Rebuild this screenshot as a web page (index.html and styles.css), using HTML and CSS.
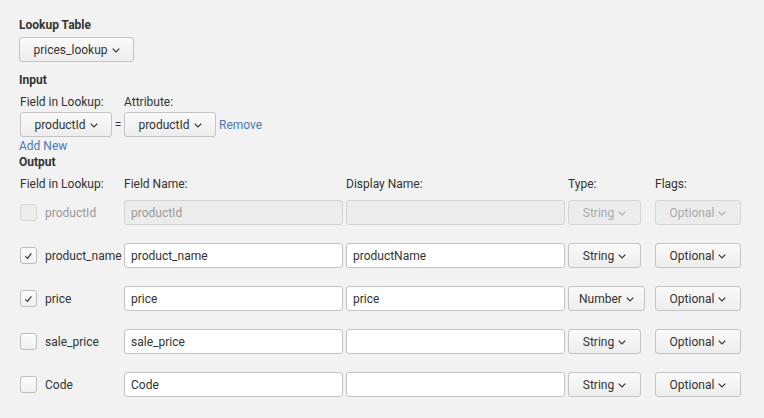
FILE: index.html
```
<!DOCTYPE html>
<html>
<head>
<meta charset="utf-8">
<link rel="stylesheet" href="styles.css">
</head>
<body>
<div class="page">
  <div class="heading first">Lookup Table</div>
  <div class="row-table">
    <button class="btn btn-table">prices_lookup<svg class="caret" viewBox="0 0 8 5" width="8" height="5"><path d="M0.7 0.7 L4 4 L7.3 0.7" fill="none" stroke="#333" stroke-width="1.2"/></svg></button>
  </div>

  <div class="heading input-head">Input</div>
  <div class="input-grid">
    <div class="lbl">Field in Lookup:</div>
    <div></div>
    <div class="lbl">Attribute:</div>
    <div></div>
    <button class="btn btn-field">productId<svg class="caret" viewBox="0 0 8 5" width="8" height="5"><path d="M0.7 0.7 L4 4 L7.3 0.7" fill="none" stroke="#333" stroke-width="1.2"/></svg></button>
    <div class="eq">=</div>
    <button class="btn btn-field">productId<svg class="caret" viewBox="0 0 8 5" width="8" height="5"><path d="M0.7 0.7 L4 4 L7.3 0.7" fill="none" stroke="#333" stroke-width="1.2"/></svg></button>
    <a class="link remove">Remove</a>
  </div>
  <a class="link addnew">Add New</a>

  <div class="heading">Output</div>
  <div class="out-head">
    <div class="lbl">Field in Lookup:</div>
    <div class="lbl">Field Name:</div>
    <div class="lbl">Display Name:</div>
    <div class="lbl">Type:</div>
    <div class="lbl">Flags:</div>
  </div>
  <div class="out-grid">
    <div class="chk-cell disabled"><span class="cb"></span><span class="fname">productId</span></div>
    <div><input class="txt" value="productId" disabled></div>
    <div><input class="txt" value="" disabled></div>
    <div><button class="btn btn-type" disabled>String<svg class="caret" viewBox="0 0 8 5" width="8" height="5"><path d="M0.7 0.7 L4 4 L7.3 0.7" fill="none" stroke="#aaa" stroke-width="1.2"/></svg></button></div>
    <div><button class="btn btn-flag" disabled>Optional<svg class="caret" viewBox="0 0 8 5" width="8" height="5"><path d="M0.7 0.7 L4 4 L7.3 0.7" fill="none" stroke="#aaa" stroke-width="1.2"/></svg></button></div>

    <div class="chk-cell"><span class="cb checked"><svg viewBox="0 0 17 17" width="17" height="17"><path d="M5.4 9.4 L7.5 11.4 L11.4 6.4" fill="none" stroke="#333" stroke-width="1.2"/></svg></span><span class="fname">product_name</span></div>
    <div><input class="txt" value="product_name"></div>
    <div><input class="txt" value="productName"></div>
    <div><button class="btn btn-type">String<svg class="caret" viewBox="0 0 8 5" width="8" height="5"><path d="M0.7 0.7 L4 4 L7.3 0.7" fill="none" stroke="#333" stroke-width="1.2"/></svg></button></div>
    <div><button class="btn btn-flag">Optional<svg class="caret" viewBox="0 0 8 5" width="8" height="5"><path d="M0.7 0.7 L4 4 L7.3 0.7" fill="none" stroke="#333" stroke-width="1.2"/></svg></button></div>

    <div class="chk-cell"><span class="cb checked"><svg viewBox="0 0 17 17" width="17" height="17"><path d="M5.4 9.4 L7.5 11.4 L11.4 6.4" fill="none" stroke="#333" stroke-width="1.2"/></svg></span><span class="fname">price</span></div>
    <div><input class="txt" value="price"></div>
    <div><input class="txt" value="price"></div>
    <div><button class="btn btn-type">Number<svg class="caret" viewBox="0 0 8 5" width="8" height="5"><path d="M0.7 0.7 L4 4 L7.3 0.7" fill="none" stroke="#333" stroke-width="1.2"/></svg></button></div>
    <div><button class="btn btn-flag">Optional<svg class="caret" viewBox="0 0 8 5" width="8" height="5"><path d="M0.7 0.7 L4 4 L7.3 0.7" fill="none" stroke="#333" stroke-width="1.2"/></svg></button></div>

    <div class="chk-cell"><span class="cb"></span><span class="fname">sale_price</span></div>
    <div><input class="txt" value="sale_price"></div>
    <div><input class="txt" value=""></div>
    <div><button class="btn btn-type">String<svg class="caret" viewBox="0 0 8 5" width="8" height="5"><path d="M0.7 0.7 L4 4 L7.3 0.7" fill="none" stroke="#333" stroke-width="1.2"/></svg></button></div>
    <div><button class="btn btn-flag">Optional<svg class="caret" viewBox="0 0 8 5" width="8" height="5"><path d="M0.7 0.7 L4 4 L7.3 0.7" fill="none" stroke="#333" stroke-width="1.2"/></svg></button></div>

    <div class="chk-cell"><span class="cb"></span><span class="fname">Code</span></div>
    <div><input class="txt" value="Code"></div>
    <div><input class="txt" value=""></div>
    <div><button class="btn btn-type">String<svg class="caret" viewBox="0 0 8 5" width="8" height="5"><path d="M0.7 0.7 L4 4 L7.3 0.7" fill="none" stroke="#333" stroke-width="1.2"/></svg></button></div>
    <div><button class="btn btn-flag">Optional<svg class="caret" viewBox="0 0 8 5" width="8" height="5"><path d="M0.7 0.7 L4 4 L7.3 0.7" fill="none" stroke="#333" stroke-width="1.2"/></svg></button></div>
  </div>
</div>
</body>
</html>
```
FILE: styles.css
```
* { box-sizing: border-box; }
html, body { margin: 0; padding: 0; }
body {
  background: #f2f2f2;
  font-family: Roboto, "Liberation Sans", sans-serif;
  font-size: 12px;
  color: #333;
  width: 764px;
  height: 418px;
  overflow: hidden;
}
.page { padding: 17px 19px 0 19px; }
.heading {
  font-weight: bold;
  line-height: 16px;
  height: 16px;
  color: #333;
}
.row-table { margin-top: 4px; }
.input-head { margin-top: 10px; }
.btn {
  font-family: inherit;
  font-size: 12px;
  color: #333;
  height: 25px;
  border: 1px solid #c3c3c3;
  border-radius: 3px;
  background: linear-gradient(#fafafa, #ededed);
  display: inline-flex;
  align-items: center;
  justify-content: center;
  padding: 0 12px;
  margin: 0;
  white-space: nowrap;
}
.caret {
  display: block;
  margin-left: 4px;
  margin-top: 1px;
  flex: none;
}
.btn-table { width: 115px; }
.input-grid {
  display: grid;
  grid-template-columns: 92px 12px 92px auto;
  grid-template-rows: 16px 25px;
  row-gap: 2px;
  align-items: center;
  margin-top: 6px;
  padding-left: 1px;
}
.btn-field { width: 92px; }
.lbl { line-height: 16px; white-space: nowrap; }
.eq { text-align: center; font-size: 12px; }
.link { color: #4a78b8; text-decoration: none; cursor: pointer; }
.remove { padding-left: 3px; }
.addnew { display: block; line-height: 16px; margin-top: 1px; }
.out-head, .out-grid {
  display: grid;
  grid-template-columns: 104px 222px 222px 87px 90px;
  padding-left: 1px;
}
.out-head { margin-top: 6px; height: 16px; }
.out-grid {
  grid-template-rows: repeat(5, 25px);
  row-gap: 18px;
  align-items: center;
  margin-top: 8px;
}
.chk-cell { display: flex; align-items: center; }
.cb {
  width: 17px;
  height: 17px;
  border: 1px solid #bdbdbd;
  border-radius: 3px;
  background: linear-gradient(#fcfcfc, #f0f0f0);
  display: inline-block;
  flex: none;
  position: relative;
}
.cb svg { position: absolute; left: -1px; top: -1px; }
.fname { margin-left: 8px; white-space: nowrap; }
.txt {
  width: 219px;
  height: 25px;
  border: 1px solid #c3c3c3;
  border-radius: 3px;
  background: #fff;
  font-family: inherit;
  font-size: 12px;
  color: #333;
  padding: 0 6px;
  margin: 0;
  outline: none;
}
.btn-type { min-width: 73px; padding: 0 10px; }
.btn-flag { width: 86px; }
.disabled .cb { background: #ececec; border-color: #d6d6d6; }
.disabled .fname { color: #999; }
.txt:disabled { background: #ececec; border-color: #d3d3d3; color: #999; }
.btn:disabled { background: #ececec; border-color: #d6d6d6; color: #aaa; }
```
